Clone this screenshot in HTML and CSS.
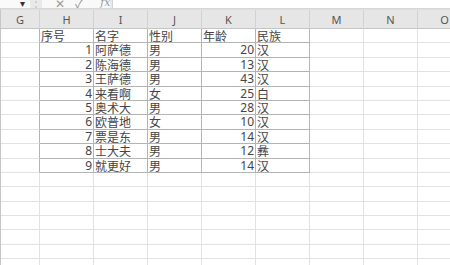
FILE: index.html
```html
<!DOCTYPE html>
<html lang="zh">
  <head>
    <meta charset="UTF-8" />
    <meta name="viewport" content="width=device-width, initial-scale=1.0" />
    <title>Sheet1</title>
    <link rel="stylesheet" href="styles.css">
  </head>
  <body>
    <div class="formula-bar">
      <div class="name-box"><span class="caret">▾</span></div>
      <div class="grip">⋮</div>
      <div class="actions">
        <span>✕</span>
        <span>✓</span>
        <span class="fx">fx</span>
      </div>
      <div class="input"></div>
    </div>

    <div class="col-heads">
      <div class="col-head">G</div>
      <div class="col-head">H</div>
      <div class="col-head">I</div>
      <div class="col-head">J</div>
      <div class="col-head">K</div>
      <div class="col-head">L</div>
      <div class="col-head">M</div>
      <div class="col-head">N</div>
      <div class="col-head">O</div>
    </div>

    <div class="sheet" id="sheet">
      <!-- rows are filled in below -->
    </div>

    <script>
      const table = [
        ["序号", "名字", "性别", "年龄", "民族"],
        [1, "阿萨德", "男", 20, "汉"],
        [2, "陈海德", "男", 13, "汉"],
        [3, "王萨德", "男", 43, "汉"],
        [4, "来看啊", "女", 25, "白"],
        [5, "奥术大", "男", 28, "汉"],
        [6, "欧普地", "女", 10, "汉"],
        [7, "票是东", "男", 14, "汉"],
        [8, "士大夫", "男", 12, "彝"],
        [9, "就更好", "男", 14, "汉"],
      ];

      const sheet = document.getElementById("sheet");
      const totalRows = 17;

      for (let r = 0; r < totalRows; r++) {
        const row = table[r];

        // column G sits outside the table
        const g = document.createElement("div");
        g.className = row ? "cell edge" : "cell";
        sheet.appendChild(g);

        for (let c = 0; c < 5; c++) {
          const cell = document.createElement("div");
          cell.className = "cell";
          if (row) {
            cell.classList.add("boxed");
            const value = row[c];
            cell.textContent = value;
            if (typeof value === "number") cell.classList.add("num");
          }
          sheet.appendChild(cell);
        }

        // M, N, O
        for (let c = 0; c < 3; c++) {
          const cell = document.createElement("div");
          cell.className = "cell";
          sheet.appendChild(cell);
        }
      }
    </script>
  </body>
</html>
```

FILE: styles.css
```css
html,
body {
  margin: 0;
  padding: 0;
  width: 450px;
  height: 265px;
  overflow: hidden;
  background: #ffffff;
  font-family: "Noto Sans CJK SC", "Noto Sans", sans-serif;
}

/* formula bar, only its bottom edge is in view */
.formula-bar {
  display: flex;
  height: 8px;
  overflow: hidden;
  background: #e9e9e9;
  border-bottom: 1px solid #d6d6d6;
  color: #9a9a9a;
  font-size: 12px;
}

.formula-bar > div {
  display: flex;
  align-items: flex-end;
  height: 8px;
  line-height: 14px;
}

.name-box {
  width: 30px;
  justify-content: flex-end;
  background: #fafafa;
  padding-right: 5px;
  box-sizing: border-box;
}

.caret {
  color: #333;
  font-size: 10px;
  margin-bottom: -2px;
}

.grip {
  width: 12px;
  justify-content: center;
  color: #c4c4c4;
  margin-bottom: -1px;
}

.actions {
  width: 68px;
  gap: 10px;
  padding-left: 13px;
  box-sizing: border-box;
  background: #f9f9f9;
}

.actions span {
  margin-bottom: -2px;
}

.fx {
  font-style: italic;
  font-family: "DejaVu Serif", serif;
  font-size: 11px;
  margin-left: 7px;
}

.input {
  flex: 1;
  background: #ffffff;
  border-left: 1px solid #d0d0d0;
  margin-left: 2px;
}

/* column letters */
.col-heads {
  display: grid;
  grid-template-columns: 39px repeat(8, 54px);
  height: 20px;
  background: #e6e6e6;
  border-left: 1px solid #c6c6c6;
  border-top: 1px solid #e0e0e0;
  border-bottom: 1px solid #c4c4c4;
  box-sizing: border-box;
}

.col-head {
  border-right: 1px solid #d2d2d2;
  text-align: center;
  font-family: "Noto Sans", sans-serif;
  font-size: 11px;
  line-height: 19px;
  color: #555;
}

/* grid body */
.sheet {
  display: grid;
  grid-template-columns: 39px repeat(8, 54px);
  grid-auto-rows: 14.4px;
  border-left: 1px solid #c6c6c6;
}

.cell {
  box-sizing: border-box;
  border-right: 1px solid #e2e2e2;
  border-bottom: 1px solid #e2e2e2;
  padding: 0 1px;
  font-size: 12px;
  line-height: 14px;
  color: #454545;
  white-space: nowrap;
  overflow: hidden;
}

.cell.boxed {
  border-color: #b4b4b4;
}

.cell.edge {
  border-right-color: #b4b4b4;
}

.cell.num {
  text-align: right;
  font-family: "Noto Sans", sans-serif;
}
```
